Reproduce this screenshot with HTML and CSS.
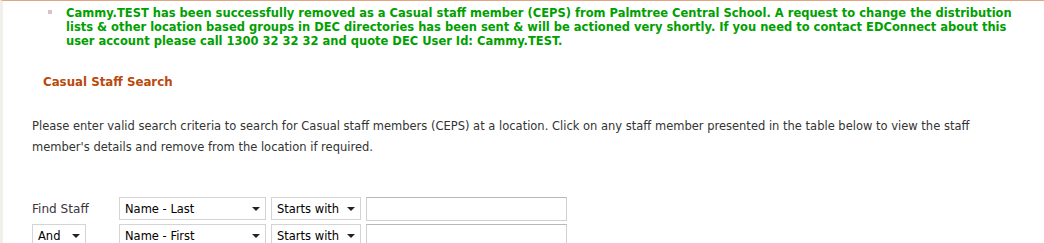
FILE: index.html
```html
<!DOCTYPE html>
<html lang="en">
<head>
  <meta charset="UTF-8">
  <title>Casual Staff Search</title>
  <link rel="stylesheet" href="styles.css">
</head>
<body>
  <div class="page">
    <!-- Status message -->
    <ul class="messages">
      <li>Cammy.TEST has been successfully removed as a Casual staff member (CEPS) from Palmtree Central School. A request to change the distribution lists &amp; other location based groups in DEC directories has been sent &amp; will be actioned very shortly. If you need to contact EDConnect about this user account please call 1300 32 32 32 and quote DEC User Id: Cammy.TEST.</li>
    </ul>

    <h3 class="title">Casual Staff Search</h3>

    <p class="intro">Please enter valid search criteria to search for Casual staff members (CEPS) at a location. Click on any staff member presented in the table below to view the staff member's details and remove from the location if required.</p>

    <!-- Search form -->
    <div class="search">
      <div class="search-row">
        <span class="label">Find Staff</span>
        <div class="select field"><span>Name - Last</span><i class="arrow"></i></div>
        <div class="select match"><span>Starts with</span><i class="arrow"></i></div>
        <div class="text-input"></div>
      </div>
      <div class="search-row">
        <div class="select join"><span>And</span><i class="arrow"></i></div>
        <div class="select field"><span>Name - First</span><i class="arrow"></i></div>
        <div class="select match"><span>Starts with</span><i class="arrow"></i></div>
        <div class="text-input"></div>
      </div>
    </div>
  </div>
</body>
</html>
```

FILE: styles.css
```css
html, body {
  margin: 0;
  padding: 0;
  background: #fff;
}
body {
  font-family: "DejaVu Sans", Verdana, sans-serif;
  color: #333;
  height: 243px;
  overflow: hidden;
}
.page {
  border-top: 1px solid #e2a685;
  border-left: 3px solid #f0f0eb;
  min-height: 242px;
  box-sizing: border-box;
}
.messages {
  list-style: none;
  margin: 0;
  padding: 5px 20px 0 63px;
}
.messages li {
  position: relative;
  color: #00a000;
  font-weight: bold;
  font-size: 11.5px;
  line-height: 14px;
}
.messages li:before {
  content: "";
  position: absolute;
  left: -18px;
  top: 4px;
  width: 4px;
  height: 4px;
  background: #dcc2c8;
}
.title {
  margin: 27px 0 0 40px;
  font-size: 11.8px;
  line-height: 14px;
  font-weight: bold;
  color: #b94a0c;
}
.intro {
  margin: 27px 45px 0 29px;
  font-size: 11.5px;
  line-height: 21px;
  color: #333;
}
.search {
  margin: 39px 0 0 29px;
  display: flex;
  flex-direction: column;
  gap: 4px;
}
.search-row {
  display: flex;
  align-items: center;
  height: 23px;
}
.label {
  width: 87px;
  font-size: 12.1px;
  color: #3d3340;
}
.select {
  box-sizing: border-box;
  height: 23px;
  border: 1px solid #d4d4d4;
  background: #fff;
  display: flex;
  align-items: center;
  justify-content: space-between;
  padding: 0 5px 0 5px;
  font-size: 11.5px;
  color: #000;
}
.select.join {
  width: 54px;
  margin-right: 33px;
}
.select.field {
  width: 147px;
  margin-right: 5px;
}
.select.match {
  width: 90px;
  margin-right: 5px;
}
.arrow {
  width: 0;
  height: 0;
  border-left: 4px solid transparent;
  border-right: 4px solid transparent;
  border-top: 4px solid #222;
}
.text-input {
  box-sizing: border-box;
  width: 201px;
  height: 24px;
  border: 1px solid #cfcfd4;
  border-top-color: #b8b8bc;
  background: #fff;
}
```
